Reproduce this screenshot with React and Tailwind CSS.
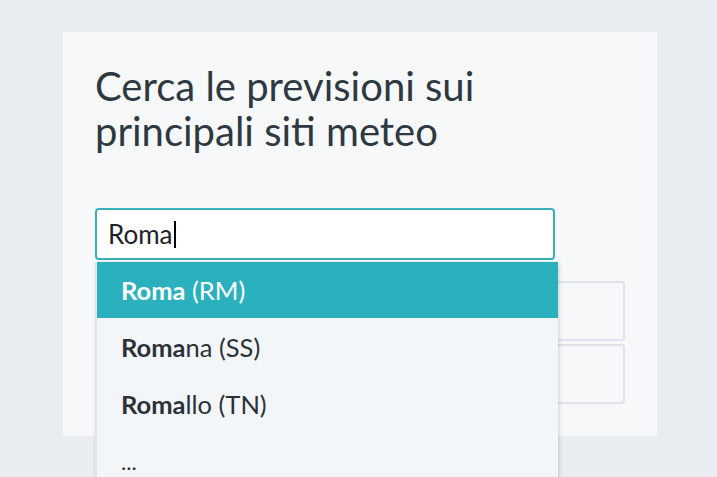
export default function App() {
  const items = [
    { b: "Roma", r: " (RM)" },
    { b: "Roma", r: "na (SS)" },
    { b: "Roma", r: "llo (TN)" },
  ];
  return (
    <div
      className="w-[717px] h-[477px] overflow-hidden bg-[#e9edf1] pt-[32px] relative"
      style={{ fontFamily: "Lato, 'Open Sans', sans-serif" }}
    >
      <div className="ml-[63px] w-[594px] h-[404px] bg-[#f6f8fa] px-[32px] pt-[32px]">
        <h1 className="text-[40px] leading-[45px] text-[#2d3840] font-normal">
          Cerca le previsioni sui
          <br />
          principali siti meteo
        </h1>
        <div className="mt-[54px] w-[460px] h-[52px] rounded-[4px] border-2 border-[#3ab0b9] bg-white flex items-center pl-[11px]">
          <span className="text-[26px] text-[#1d2226] leading-none">Roma</span>
          <span className="w-[2px] h-[27px] bg-black ml-[1px]"></span>
        </div>
        <div className="mt-[21px] flex flex-col gap-[3px]">
          <div className="h-[60px] w-[530px] rounded-[3px] border-2 border-[#e0e4e8]"></div>
          <div className="h-[60px] w-[530px] rounded-[3px] border-2 border-[#e0e4e8]"></div>
        </div>
      </div>
      <div className="absolute left-[95px] top-[262px] w-[463px] h-[260px] bg-[#f3f6f8] border-l-2 border-[#e2e6ea] shadow-[1px_1px_4px_rgba(0,0,0,0.18)]">
        {items.map((it, i) => (
          <div
            key={i}
            className={
              "flex items-center pl-[24px] text-[25.5px] " +
              (i === 0 ? "bg-[#2ab1bd] text-white h-[56px] mb-[1px]" : "h-[57px] text-[#2b3137]")
            }
          >
            <span className="whitespace-pre">
              <span className="font-bold">{it.b}</span>
              {it.r}
            </span>
          </div>
        ))}
        <div className="h-[57px] flex items-center pl-[24px] text-[22px] text-[#2b3137]">
          ...
        </div>
      </div>
    </div>
  );
}
